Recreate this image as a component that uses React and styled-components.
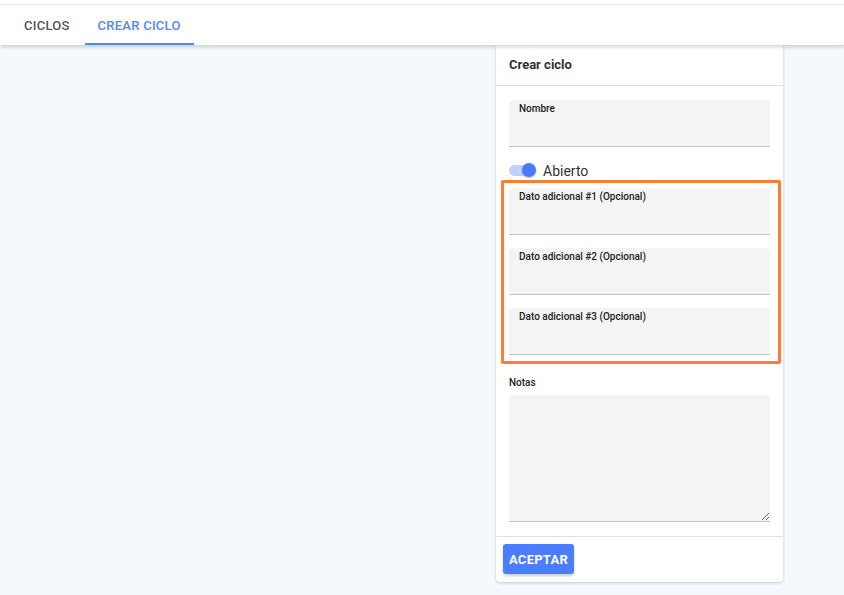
import React, { useState } from 'react';
import styled, { createGlobalStyle } from 'styled-components';

const GlobalStyle = createGlobalStyle`
  * { box-sizing: border-box; }
  html, body {
    margin: 0;
    padding: 0;
    background: #f5f9fd;
    font-family: Roboto, "Liberation Sans", Arial, sans-serif;
    color: #333;
  }
`;

const Page = styled.div`
  min-height: 595px;
  display: flex;
  flex-direction: column;
`;

const TopStrip = styled.div`
  height: 5px;
  background: #fff;
  border-bottom: 1px solid #ececec;
`;

const Header = styled.header`
  position: relative;
  z-index: 2;
  height: 40px;
  background: #fff;
  display: flex;
  align-items: stretch;
  gap: 2px;
  padding-left: 11px;
  box-shadow: 0 2px 4px rgba(0, 0, 0, 0.18);
`;

const Tab = styled.button`
  border: none;
  background: transparent;
  padding: 0 13px;
  font-family: inherit;
  font-size: 13px;
  font-weight: 500;
  letter-spacing: 0.25px;
  text-transform: uppercase;
  color: ${(p) => (p.$active ? '#5585ff' : '#555')};
  border-bottom: 2px solid ${(p) => (p.$active ? '#5585ff' : 'transparent')};
  padding-top: 2px;
  cursor: pointer;
`;

const Main = styled.main`
  display: flex;
  justify-content: flex-end;
  padding-right: 61px;
`;

const Card = styled.section`
  width: 287px;
  background: #fff;
  border-radius: 0 0 4px 4px;
  box-shadow: 0 1px 3px rgba(0, 0, 0, 0.2);
`;

const CardTitle = styled.h2`
  margin: 0;
  height: 41px;
  display: flex;
  align-items: center;
  padding: 0 14px 2px 13px;
  font-size: 13px;
  font-weight: 700;
  color: #333;
  border-bottom: 1px solid #e2e2e2;
`;

const CardBody = styled.div`
  padding: 14px 13px 14px;
  display: flex;
  flex-direction: column;
`;

const Field = styled.label`
  display: block;
  height: 47px;
  background: #f4f4f4;
  border-radius: 4px 4px 0 0;
  border-bottom: 1px solid #c4c4c4;
  padding: 3px 10px 0;
`;

const FieldLabel = styled.span`
  display: block;
  font-size: 10px;
  font-weight: 500;
  color: #222;
  line-height: 12px;
`;

const FieldInput = styled.input`
  display: block;
  width: 100%;
  border: none;
  background: transparent;
  outline: none;
  font-family: inherit;
  font-size: 13px;
  margin-top: 6px;
`;

const ToggleRow = styled.div`
  display: flex;
  align-items: center;
  gap: 8px;
  height: 19px;
  margin: 14px 0 0;
`;

const Track = styled.button`
  position: relative;
  width: 26px;
  height: 11px;
  border: none;
  padding: 0;
  border-radius: 6px;
  background: ${(p) => (p.$on ? '#c3d2fd' : '#ccc')};
  cursor: pointer;
`;

const Thumb = styled.span`
  position: absolute;
  top: -2px;
  left: ${(p) => (p.$on ? '13px' : '-1px')};
  width: 14px;
  height: 14px;
  border-radius: 50%;
  background: ${(p) => (p.$on ? '#4a7bff' : '#fafafa')};
  box-shadow: 0 1px 2px rgba(0, 0, 0, 0.25);
`;

const ToggleText = styled.span`
  font-size: 14px;
  color: #333;
`;

const Highlight = styled.div`
  display: flex;
  flex-direction: column;
  gap: 13px;
  margin: 0 -11px 0 -8px;
  padding: 5px 8px 6px 5px;
  border: 3px solid #ff7b36;
  border-radius: 2px;
`;

const NotesLabel = styled.span`
  display: block;
  margin-top: 13px;
  font-size: 10px;
  font-weight: 500;
  color: #222;
  line-height: 12px;
`;

const Notes = styled.textarea`
  display: block;
  width: 100%;
  height: 127px;
  margin-top: 6px;
  border: none;
  border-bottom: 1px solid #c4c4c4;
  border-radius: 4px 4px 0 0;
  background: #f4f4f4;
  resize: vertical;
  outline: none;
  font-family: inherit;
  padding: 8px 10px;
`;

const CardFooter = styled.div`
  border-top: 1px solid #e2e2e2;
  padding: 7px 7px 8px;
`;

const AcceptButton = styled.button`
  height: 30px;
  padding: 0 6px;
  border: none;
  border-radius: 3px;
  background: #4a7dff;
  color: #fff;
  font-family: inherit;
  font-size: 13px;
  font-weight: 700;
  letter-spacing: 0.25px;
  text-transform: uppercase;
  box-shadow: 0 2px 3px rgba(0, 0, 0, 0.2);
  cursor: pointer;
`;

const TextField = ({ label }) => (
  <Field>
    <FieldLabel>{label}</FieldLabel>
    <FieldInput type='text' />
  </Field>
);

export default function App() {
  const [tab, setTab] = useState('crear');
  const [open, setOpen] = useState(true);

  return (
    <Page>
      <GlobalStyle />
      <TopStrip />
      <Header>
        <Tab $active={tab === 'ciclos'} onClick={() => setTab('ciclos')}>
          Ciclos
        </Tab>
        <Tab $active={tab === 'crear'} onClick={() => setTab('crear')}>
          Crear ciclo
        </Tab>
      </Header>
      <Main>
        <Card>
          <CardTitle>Crear ciclo</CardTitle>
          <CardBody>
            <TextField label='Nombre' />
            <ToggleRow>
              <Track $on={open} onClick={() => setOpen(!open)}>
                <Thumb $on={open} />
              </Track>
              <ToggleText>Abierto</ToggleText>
            </ToggleRow>
            <Highlight>
              <TextField label='Dato adicional #1 (Opcional)' />
              <TextField label='Dato adicional #2 (Opcional)' />
              <TextField label='Dato adicional #3 (Opcional)' />
            </Highlight>
            <NotesLabel>Notas</NotesLabel>
            <Notes />
          </CardBody>
          <CardFooter>
            <AcceptButton>Aceptar</AcceptButton>
          </CardFooter>
        </Card>
      </Main>
    </Page>
  );
}
